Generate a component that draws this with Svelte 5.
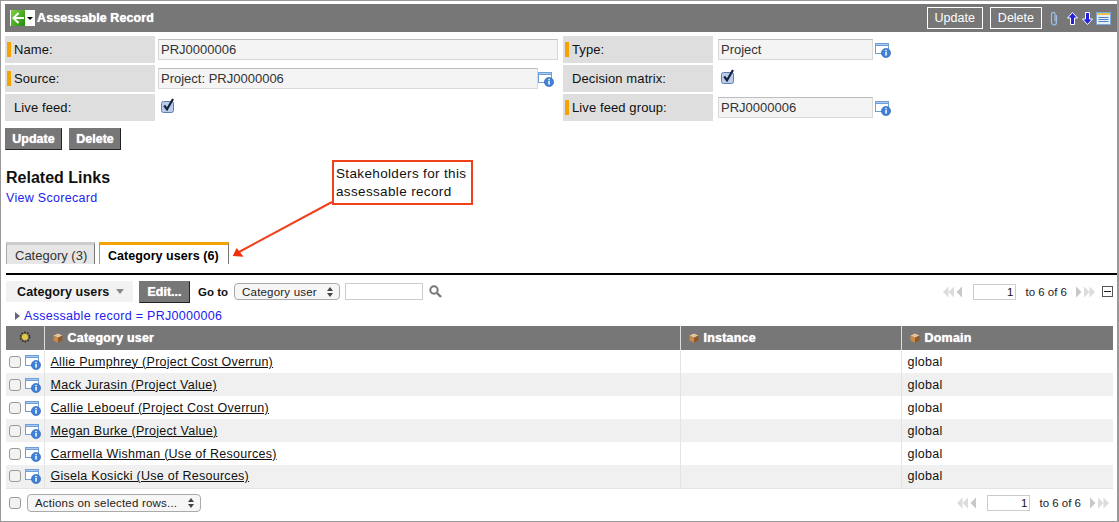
<script>
	const users = [
		'Allie Pumphrey (Project Cost Overrun)',
		'Mack Jurasin (Project Value)',
		'Callie Leboeuf (Project Cost Overrun)',
		'Megan Burke (Project Value)',
		'Carmella Wishman (Use of Resources)',
		'Gisela Kosicki (Use of Resources)'
	];
</script>

{#snippet refIcon()}
	<svg class="ref-icon" viewBox="0 0 16 16" width="16" height="16">
		<rect x="0.5" y="1.5" width="13" height="10" fill="#fff" stroke="#6f9fd8" />
		<rect x="0.5" y="1.5" width="13" height="2" fill="#a9c8ec" stroke="#6f9fd8" />
		<circle cx="11" cy="11" r="4.6" fill="#3f80d8" stroke="#2a62b0" stroke-width="0.6" />
		<rect x="10.3" y="10" width="1.5" height="3.6" fill="#fff" />
		<rect x="10.3" y="7.9" width="1.5" height="1.4" fill="#fff" />
	</svg>
{/snippet}

{#snippet checked()}
	<svg class="check" viewBox="0 0 14 15" width="14" height="15">
		<rect x="0.5" y="3.5" width="12" height="11" rx="2" fill="#b9cdea" stroke="#5e7fae" />
		<path d="M3.2 7.5 L6 11.2 L12 1" fill="none" stroke="#14233f" stroke-width="2.2" />
	</svg>
{/snippet}

{#snippet cube()}
	<svg class="cube" viewBox="0 0 10 10" width="10" height="10">
		<path d="M5 0.5 L9.5 2.6 L5 4.8 L0.5 2.6 Z" fill="#e8c49a" />
		<path d="M0.5 2.6 L5 4.8 V9.8 L0.5 7.6 Z" fill="#c98a4a" />
		<path d="M9.5 2.6 L5 4.8 V9.8 L9.5 7.6 Z" fill="#8f5a28" />
	</svg>
{/snippet}

{#snippet pager()}
	<div class="pager">
		<span class="arrows">
			<svg viewBox="0 0 21 12" width="21" height="12"><path d="M6.5 0.5 V11.5 L1 6 Z M12 0.5 V11.5 L6.5 6 Z" fill="#dcdcdc" /><path d="M20 0.5 V11.5 L14.5 6 Z" fill="#c8c8c8" /></svg>
		</span>
		<span class="page-box">1</span>
		<span class="page-text">to 6 of 6</span>
		<span class="arrows right">
			<svg viewBox="0 0 21 12" width="21" height="12"><path d="M1 0.5 V11.5 L6.5 6 Z" fill="#c8c8c8" /><path d="M9 0.5 V11.5 L14.5 6 Z M14.5 0.5 V11.5 L20 6 Z" fill="#dcdcdc" /></svg>
		</span>
	</div>
{/snippet}

<div class="page">
	<header class="title-bar">
		<div class="nav-menu">
			<svg viewBox="0 0 14 16" width="14" height="16">
				<defs>
					<linearGradient id="navgreen" x1="0" y1="0" x2="1" y2="1">
						<stop offset="0" stop-color="#7ed23a" />
						<stop offset="1" stop-color="#1f8a10" />
					</linearGradient>
				</defs>
				<rect width="14" height="16" fill="url(#navgreen)" />
				<path d="M13 8 H3 M7.5 3 L2.5 8 L7.5 13" fill="none" stroke="#fff" stroke-width="2" />
			</svg>
			<span class="caret"></span>
		</div>
		<h1>Assessable Record</h1>
		<div class="title-actions">
			<button class="outline">Update</button>
			<button class="outline">Delete</button>
			<svg class="clip" viewBox="0 0 10 15" width="10" height="15">
				<path d="M7.5 4 V11 A2.5 3 0 0 1 2.5 11 V3.5 A1.7 2 0 0 1 6 3.5 V10.5" fill="none" stroke="#9cc0e6" stroke-width="1.2" />
			</svg>
			<svg class="up" viewBox="0 0 11 13" width="11" height="13">
				<path d="M5.5 0.5 L10.5 6 H7.5 V12.5 H3.5 V6 H0.5 Z" fill="#2222dd" stroke="#fff" />
			</svg>
			<svg class="dn" viewBox="0 0 11 13" width="11" height="13">
				<path d="M5.5 12.5 L10.5 7 H7.5 V0.5 H3.5 V7 H0.5 Z" fill="#2222dd" stroke="#fff" />
			</svg>
			<svg viewBox="0 0 15 13" width="15" height="13">
				<rect x="0.5" y="0.5" width="14" height="12" fill="#e4effa" stroke="#7ba7d8" />
				<rect x="1" y="1" width="13" height="2" fill="#f0c04a" />
				<path d="M2.5 5.5 H12.5 M2.5 7.5 H12.5 M2.5 9.5 H12.5" stroke="#4f7fbf" />
			</svg>
		</div>
	</header>

	<div class="form">
		<div class="label req">Name:</div>
		<div class="value"><div class="field wide">PRJ0000006</div></div>
		<div class="label req">Type:</div>
		<div class="value"><div class="field short">Project</div>{@render refIcon()}</div>

		<div class="label req">Source:</div>
		<div class="value"><div class="field medium">Project: PRJ0000006</div>{@render refIcon()}</div>
		<div class="label">Decision matrix:</div>
		<div class="value">{@render checked()}</div>

		<div class="label">Live feed:</div>
		<div class="value">{@render checked()}</div>
		<div class="label req">Live feed group:</div>
		<div class="value"><div class="field short">PRJ0000006</div>{@render refIcon()}</div>
	</div>

	<div class="form-buttons">
		<button class="solid btn-update">Update</button>
		<button class="solid btn-delete">Delete</button>
	</div>

	<section class="related">
		<h2>Related Links</h2>
		<a href="#scorecard">View Scorecard</a>
	</section>

	<nav class="tabs">
		<div class="tab">Category (3)</div>
		<div class="tab active">Category users (6)</div>
	</nav>

	<div class="toolbar">
		<div class="list-title">Category users <span class="down"></span></div>
		<button class="solid edit">Edit...</button>
		<span class="goto">Go to</span>
		<div class="select goto-select">Category user <span class="updown-glyph"></span></div>
		<div class="search-input"></div>
		<svg class="search" viewBox="0 0 13 13" width="13" height="13">
			<circle cx="5" cy="5" r="3.7" fill="none" stroke="#777" stroke-width="2" />
			<path d="M8 8 L12 12" stroke="#777" stroke-width="2.4" />
		</svg>
		<div class="spacer"></div>
		{@render pager()}
		<span class="collapse"></span>
	</div>

	<div class="filter"><span class="tri"></span><a href="#filter">Assessable record = PRJ0000006</a></div>

	<table>
		<thead>
			<tr>
				<th class="c-tools">
					<svg viewBox="0 0 12 12" width="12" height="12">
						<circle cx="6" cy="6" r="4.6" fill="none" stroke="#2b2b10" stroke-width="1.6" stroke-dasharray="1.6 1.3" />
						<circle cx="6" cy="6" r="3" fill="#e8c93c" />
					</svg>
				</th>
				<th class="c-user">{@render cube()}Category user</th>
				<th class="c-inst">{@render cube()}Instance</th>
				<th class="c-domain">{@render cube()}Domain</th>
			</tr>
		</thead>
		<tbody>
			{#each users as user}
				<tr>
					<td class="c-tools"><div class="row-tools"><span class="box"></span>{@render refIcon()}</div></td>
					<td class="c-user"><a href="#user">{user}</a></td>
					<td></td>
					<td>global</td>
				</tr>
			{/each}
		</tbody>
	</table>

	<div class="footer">
		<span class="box"></span>
		<div class="select actions">Actions on selected rows... <span class="updown-glyph"></span></div>
		<div class="spacer"></div>
		{@render pager()}
	</div>

	<!-- callout drawn over the page -->
	<div class="callout">Stakeholders for this<br />assessable record</div>
	<svg class="callout-arrow" viewBox="0 0 110 65" width="110" height="65">
		<path d="M102 2 L9 52" stroke="#f0401c" stroke-width="2" fill="none" />
		<path d="M2.7 56 L6.7 48 L13.5 56.7 Z" fill="#f0300c" />
	</svg>
</div>

<style>
	:global(body) {
		margin: 0;
		background: #fff;
	}

	.page {
		position: relative;
		box-sizing: border-box;
		width: 1119px;
		height: 522px;
		border: 1px solid #999;
		border-right-width: 2px;
		padding: 3px 0 0 4px;
		overflow: hidden;
		font-family: "Liberation Sans", Arial, sans-serif;
		font-size: 13px;
		color: #111;
	}

	a {
		color: #2222ee;
		text-decoration: none;
	}

	button {
		font-family: inherit;
		cursor: pointer;
	}

	.title-bar {
		display: flex;
		align-items: center;
		height: 28px;
		background: #777;
		margin-right: -1px;
		color: #fff;
	}

	.nav-menu {
		display: flex;
		align-items: center;
		box-sizing: border-box;
		width: 25px;
		height: 16px;
		margin-left: 5px;
		padding-left: 1px;
		background: #fff;
	}

	.caret {
		margin-left: 2px;
		border: 3px solid transparent;
		border-top: 3px solid #000;
		border-bottom: 0;
	}

	h1 {
		margin: 0 0 0 2px;
		font-size: 12.5px;
		font-weight: bold;
		letter-spacing: 0.1px;
		text-shadow: 0 0 1px #fff;
	}

	.title-actions {
		display: flex;
		align-items: center;
		margin-left: auto;
		padding-right: 7px;
	}

	.outline {
		height: 22px;
		padding: 0 7px;
		margin-right: 7px;
		background: transparent;
		border: 1px solid #fff;
		color: #fff;
		font-size: 12.5px;
	}

	.outline + .outline {
		margin-right: 7px;
	}

	.clip {
		margin: 0 8px 0 0;
	}

	.up {
		margin-right: 4px;
	}

	.dn {
		margin-right: 3px;
	}

	.form {
		display: grid;
		grid-template-columns: 150px 408px 150px 1fr;
		grid-auto-rows: 27px;
		row-gap: 2px;
		margin-top: 4px;
	}

	.label {
		display: flex;
		align-items: center;
		padding-left: 9px;
		background: #dedede;
		position: relative;
		letter-spacing: 0.1px;
	}

	.label.req::before {
		content: "";
		position: absolute;
		left: 2px;
		top: 6px;
		width: 4px;
		height: 15px;
		background: #f5a300;
	}

	.value {
		display: flex;
		align-items: center;
		padding-left: 3px;
	}

	.value:nth-child(4n + 4) {
		padding-left: 5px;
	}

	.field {
		box-sizing: border-box;
		height: 21px;
		line-height: 19px;
		padding-left: 2px;
		background: #f4f4f4;
		border: 1px solid #d8d8d8;
		border-top-color: #bdbdbd;
		color: #333;
	}

	.wide {
		width: 400px;
	}

	.medium {
		width: 380px;
	}

	.short {
		width: 155px;
	}

	.ref-icon {
		flex: none;
		margin-left: 2px;
	}

	.medium + .ref-icon {
		margin-left: 0;
	}

	.check {
		margin: -4px 0 0 3px;
	}

	.form-buttons {
		display: flex;
		gap: 7px;
		margin-top: 7px;
	}

	.solid {
		height: 22px;
		padding: 0;
		background: #777;
		border: 1px solid #777;
		border-right-color: #222;
		border-bottom-color: #222;
		color: #fff;
		font-size: 12.5px;
		font-weight: bold;
		text-shadow: 0 0 1px #fff;
	}

	.btn-update {
		width: 57px;
	}

	.btn-delete {
		width: 52px;
	}

	.related {
		margin: 18px 0 0 1px;
		height: 74px;
	}

	h2 {
		margin: 0 0 1px;
		font-size: 16px;
		line-height: 20px;
	}

	.related a {
		font-size: 12.5px;
		line-height: 18px;
		letter-spacing: 0.3px;
		display: block;
	}

	.tabs {
		display: flex;
		gap: 4px;
		margin-left: 1px;
		height: 31px;
		border-bottom: 2px solid #000;
	}

	.tab {
		box-sizing: border-box;
		width: 89px;
		height: 22px;
		padding: 3px 0 0 8px;
		background: #e6e6e6;
		border-top: 3px solid #ccc;
		border-right: 1px solid #777;
		border-left: 1px solid #aaa;
		color: #333;
		white-space: nowrap;
	}

	.tab.active {
		width: 130px;
		padding-top: 4px;
		background: #fff;
		border-top-color: #f5a300;
		border-left-color: #999;
		color: #000;
		font-size: 12.5px;
		font-weight: bold;
		letter-spacing: 0.05px;
	}

	.toolbar {
		display: flex;
		align-items: center;
		height: 21px;
		margin: 6px 4px 0 1px;
	}

	.list-title {
		display: flex;
		align-items: center;
		box-sizing: border-box;
		width: 127px;
		height: 21px;
		padding-left: 11px;
		background: #f2f2f2;
		font-weight: bold;
		font-size: 12.5px;
		letter-spacing: 0.1px;
	}

	.down {
		margin-left: 7px;
		border: 4px solid transparent;
		border-top: 5px solid #888;
		border-bottom: 0;
	}

	.edit {
		margin-left: 6px;
		width: 51px;
	}

	.goto {
		margin-left: 8px;
		font-size: 11.5px;
		font-weight: bold;
	}

	.select {
		display: flex;
		align-items: center;
		box-sizing: border-box;
		height: 17px;
		background: #f6f6f6;
		border: 1px solid #aaa;
		border-radius: 4px;
		font-size: 11.5px;
		letter-spacing: 0.2px;
		color: #222;
		position: relative;
	}

	.goto-select {
		width: 106px;
		margin-left: 6px;
		padding-left: 7px;
	}

	.updown-glyph {
		position: absolute;
		right: 6px;
		top: 3px;
		border: 3px solid transparent;
		border-top: 0;
		border-bottom: 4px solid #444;
	}

	.updown-glyph::after {
		content: "";
		position: absolute;
		left: -3px;
		top: 6px;
		border: 3px solid transparent;
		border-bottom: 0;
		border-top: 4px solid #444;
	}

	.search-input {
		box-sizing: border-box;
		width: 78px;
		height: 17px;
		margin-left: 5px;
		border: 1px solid #ccc;
	}

	.search {
		margin-left: 6px;
	}

	.spacer {
		flex: 1;
	}

	.pager {
		display: flex;
		align-items: center;
		font-size: 11.5px;
	}

	.page-box {
		box-sizing: border-box;
		width: 43px;
		height: 16px;
		margin: 0 9px 0 10px;
		padding-right: 2px;
		border: 1px solid #ccc;
		text-align: right;
		line-height: 15px;
	}

	.page-text {
		color: #222;
	}

	.arrows {
		display: flex;
	}

	.arrows.right {
		margin-left: 8px;
	}

	.collapse {
		box-sizing: border-box;
		position: relative;
		width: 11px;
		height: 11px;
		margin-left: 6px;
		border: 1px solid #555;
	}

	.collapse::after {
		content: "";
		position: absolute;
		left: 1px;
		top: 4px;
		width: 7px;
		height: 1px;
		background: #222;
	}

	.filter {
		display: flex;
		align-items: center;
		height: 17px;
		margin: 5px 0 0 10px;
		font-size: 12.5px;
		letter-spacing: 0.3px;
	}

	.tri {
		margin-right: 4px;
		border: 4px solid transparent;
		border-left: 5px solid #667;
		border-right: 0;
	}

	table {
		width: 1107px;
		margin: 2px 0 0 1px;
		table-layout: fixed;
		border-collapse: collapse;
	}

	th {
		box-sizing: border-box;
		height: 24px;
		padding: 0 0 0 8px;
		background: #777;
		border-left: 1px solid #ddd;
		color: #fff;
		text-align: left;
		font-size: 12.5px;
		font-weight: bold;
		letter-spacing: 0.2px;
		text-shadow: 0 0 1px #fff;
	}

	th:first-child {
		border-left: 0;
	}

	.c-tools {
		width: 38px;
	}

	.c-user {
		width: 636px;
	}

	.c-inst {
		width: 221px;
	}

	th.c-tools {
		text-align: center;
		padding: 0;
	}

	th svg {
		vertical-align: -1px;
	}

	.cube {
		margin-right: 5px;
	}

	td {
		box-sizing: border-box;
		height: 23px;
		padding: 0 0 0 6px;
		border-left: 1px solid #e4e4e4;
		font-size: 12.5px;
		letter-spacing: 0.27px;
	}

	td:first-child {
		border-left: 0;
		padding: 0 0 0 3px;
	}

	tbody tr:nth-child(even) {
		background: #f0f0f0;
	}

	tbody tr:last-child td {
		border-bottom: 1px solid #e4e4e4;
	}

	td a {
		color: #111;
		text-decoration: underline;
	}

	.row-tools {
		display: flex;
		align-items: center;
	}

	.row-tools .ref-icon {
		margin-left: 4px;
	}

	.box {
		flex: none;
		display: block;
		box-sizing: border-box;
		width: 12px;
		height: 12px;
		background: #f2f2f2;
		border: 1px solid #999;
		border-radius: 3px;
	}

	.footer {
		display: flex;
		align-items: center;
		height: 22px;
		margin: 3px 7px 0 4px;
	}

	.actions {
		width: 174px;
		height: 18px;
		margin-left: 6px;
		padding-left: 7px;
	}

	.callout {
		position: absolute;
		left: 331px;
		top: 159px;
		box-sizing: border-box;
		width: 141px;
		height: 45px;
		padding: 3px 0 0 2px;
		background: #fff;
		border: 2px solid #f0401c;
		font-size: 13.5px;
		line-height: 18px;
		letter-spacing: 0.35px;
	}

	.callout-arrow {
		position: absolute;
		left: 229px;
		top: 199px;
	}
</style>
